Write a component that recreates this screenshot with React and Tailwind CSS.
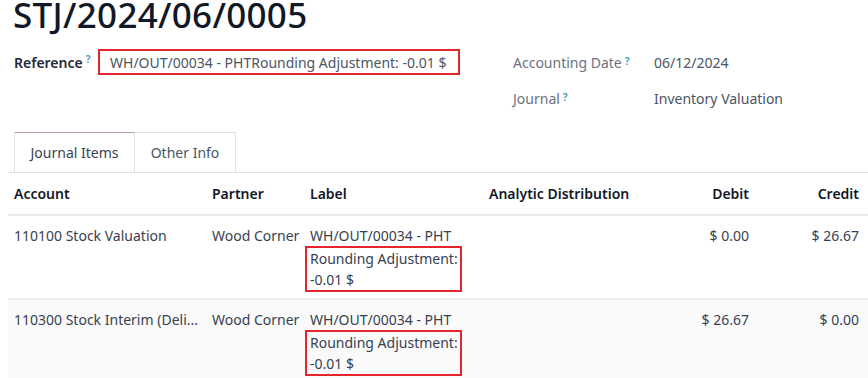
import React from 'react';

const Help = () => (
    <sup className="ml-[3px] text-[10px] font-bold text-[#4aa3c4] relative -top-[3px]">?</sup>
);

const rows = [
    { account: '110100 Stock Valuation', partner: 'Wood Corner', debit: '$ 0.00', credit: '$ 26.67' },
    { account: '110300 Stock Interim (Deli...', partner: 'Wood Corner', debit: '$ 26.67', credit: '$ 0.00' },
];

const App = () => {
    return (
        <div className="w-[868px] h-[378px] overflow-hidden bg-white text-[14px] text-[#374151]" style={{ fontFamily: '"Noto Sans", sans-serif' }}>
            {/* Title */}
            <h1 className="pl-[13px] h-[40px] text-[35px] leading-[30px] tracking-[0.3px] font-medium text-[#111827]">STJ/2024/06/0005</h1>

            {/* Fields */}
            <div className="flex pl-[14px] mt-[9px]">
                <div className="w-[499px] flex items-start">
                    <div className="w-[84px] h-[26px] flex items-center font-semibold text-[#1f2937]">
                        Reference<Help />
                    </div>
                    <div className="w-[362px] h-[26px] flex items-center pl-[10px] border-2 border-[#e5242b] text-[#4b5563]">
                        WH/OUT/00034 - PHTRounding Adjustment: -0.01 $
                    </div>
                </div>
                <div className="flex flex-col">
                    <div className="flex h-[26px] items-center">
                        <div className="w-[141px] text-[#6b7280]">Accounting Date<Help /></div>
                        <div className="text-[#4b5563]">06/12/2024</div>
                    </div>
                    <div className="flex h-[26px] items-center mt-[10px]">
                        <div className="w-[141px] text-[#6b7280]">Journal<Help /></div>
                        <div className="text-[#4b5563]">Inventory Valuation</div>
                    </div>
                </div>
            </div>

            {/* Tabs */}
            <div className="ml-[8px] mt-[21px] pl-[6px] flex border-b border-[#dee2e6]">
                <div className="w-[121px] h-[40px] flex items-center justify-center border border-b-0 border-[#dee2e6] border-t-[#b89aae] text-[#374151]">
                    Journal Items
                </div>
                <div className="w-[101px] h-[40px] flex items-center justify-center border border-l-0 border-b-0 border-[#dee2e6] text-[#4b5563]">
                    Other Info
                </div>
            </div>

            {/* Table */}
            <table className="ml-[8px] w-[860px] table-fixed border-collapse">
                <colgroup>
                    <col className="w-[198px]" />
                    <col className="w-[98px]" />
                    <col className="w-[179px]" />
                    <col className="w-[162px]" />
                    <col className="w-[110px]" />
                    <col className="w-[113px]" />
                </colgroup>
                <thead>
                    <tr className="h-[42px] border-b-2 border-[#e9ecef] text-[#111827]">
                        <th className="px-[6px] text-left font-semibold">Account</th>
                        <th className="px-[6px] text-left font-semibold">Partner</th>
                        <th className="px-[6px] text-left font-semibold">Label</th>
                        <th className="px-[6px] text-left font-semibold">Analytic Distribution</th>
                        <th className="px-[6px] text-right font-semibold">Debit</th>
                        <th className="pl-[6px] pr-[9px] text-right font-semibold">Credit</th>
                    </tr>
                </thead>
                <tbody>
                    {rows.map((row, i) => (
                        <tr key={i} className={`align-top leading-[21px] ${i === 0 ? 'border-b-2 border-[#eeeeee]' : 'bg-[#fafafa]'}`}>
                            <td className="px-[6px] pt-[9px] pb-[6px] whitespace-nowrap">{row.account}</td>
                            <td className="px-[6px] pt-[9px] whitespace-nowrap">{row.partner}</td>
                            <td className="px-[6px] pt-[9px] pb-[6px] whitespace-nowrap">
                                <div>WH/OUT/00034 - PHT</div>
                                <div className="-ml-[5px] w-[157px] pl-[3px] border-2 border-[#e5242b]">
                                    Rounding Adjustment:<br />-0.01 $
                                </div>
                            </td>
                            <td className="px-[6px] pt-[9px]"></td>
                            <td className="px-[6px] pt-[9px] text-right">{row.debit}</td>
                            <td className="pl-[6px] pr-[9px] pt-[9px] text-right">{row.credit}</td>
                        </tr>
                    ))}
                </tbody>
            </table>
        </div>
    );
};

export default App;
